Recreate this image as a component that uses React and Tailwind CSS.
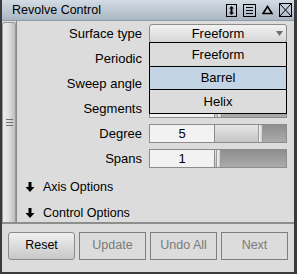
import React from "react";

const font = { fontFamily: '"Liberation Sans", Arial, sans-serif' };

function DownArrow() {
  return (
    <svg width="10" height="10" viewBox="0 0 10 10" className="block">
      <polygon points="3.5,0 6.5,0 6.5,5 9.5,5 5,10 0.5,5 3.5,5" fill="#000" />
    </svg>
  );
}

function Field({ value, pos }) {
  return (
    <div className="flex h-[19px] w-[138px]">
      <div className="flex w-[66px] items-center justify-center border border-[#8c8c8c] bg-[#f2f2f2] text-[13px] text-black">
        {value}
      </div>
      <div className="relative flex flex-1 border border-l-0 border-[#8c8c8c]">
        <div className="bg-gradient-to-b from-[#e6e6e6] to-[#c6c6c6]" style={{ width: pos }} />
        <div className="w-[5px] border-x border-[#9a9a9a] bg-gradient-to-r from-[#f4f4f4] to-[#cfcfcf]" />
        <div className="flex-1 bg-gradient-to-b from-[#8e8e8e] to-[#ababab]" />
      </div>
    </div>
  );
}

function Row({ label, children }) {
  return (
    <div className="flex h-[19px] items-center gap-[7px]">
      <div className="w-[125px] text-right text-[13px] leading-none text-black">{label}</div>
      {children}
    </div>
  );
}

export default function App() {
  return (
    <div
      style={font}
      className="relative flex h-[274px] w-[297px] flex-col overflow-hidden border-b-2 border-l-2 border-r-[3px] border-[#3a3a3a] bg-[#dcdcdc]"
    >
      {/* Title bar */}
      <div className="flex h-[21px] shrink-0 items-center border-b border-[#8e9aa6] bg-gradient-to-b from-[#d3dce5] to-[#aab6c2] pl-[10px] pr-[2px]">
        <div className="flex-1 text-[12.5px] text-black">Revolve Control</div>
        <div className="flex items-center gap-[6px]">
          <svg width="11" height="13" viewBox="0 0 11 13">
            <rect x="0.5" y="0.5" width="10" height="12" fill="none" stroke="#000" />
            <polygon points="5.5,2 8,4.5 3,4.5" fill="#000" />
            <polygon points="5.5,11 8,8.5 3,8.5" fill="#000" />
            <rect x="4.5" y="4" width="2" height="5" fill="#000" />
          </svg>
          <svg width="13" height="13" viewBox="0 0 13 13">
            <rect x="0.5" y="0.5" width="12" height="12" fill="none" stroke="#000" />
            <line x1="3" y1="3.5" x2="10" y2="3.5" stroke="#000" />
            <line x1="3" y1="6.5" x2="10" y2="6.5" stroke="#000" />
            <line x1="3" y1="9.5" x2="10" y2="9.5" stroke="#000" />
          </svg>
          <svg width="11" height="10" viewBox="0 0 11 10">
            <polygon points="5.5,1.5 10,8.5 1,8.5" fill="none" stroke="#000" strokeWidth="1.6" strokeLinejoin="miter" />
          </svg>
          <svg width="13" height="14" viewBox="0 0 13 14">
            <rect x="0.5" y="0.5" width="12" height="13" fill="none" stroke="#000" />
            <line x1="1" y1="1" x2="12" y2="13" stroke="#000" />
            <line x1="12" y1="1" x2="1" y2="13" stroke="#000" />
          </svg>
        </div>
      </div>

      {/* Body */}
      <div className="flex h-[201px] shrink-0">
        {/* left strip */}
        <div className="mt-[1px] flex w-[14px] shrink-0 flex-col items-center justify-center rounded-t-[3px] border border-b-0 border-[#9a9a9a] bg-gradient-to-r from-[#ececec] via-[#e0e0e0] to-[#bdbdbd]">
          <div className="flex flex-col gap-[2px]">
            <div className="h-[1px] w-[7px] bg-[#6e6e6e]" />
            <div className="h-[1px] w-[7px] bg-[#6e6e6e]" />
            <div className="h-[1px] w-[7px] bg-[#6e6e6e]" />
          </div>
        </div>
        <div className="relative flex flex-1 flex-col border-l border-[#8a8a8a] pt-[3px]">
          <div className="flex flex-col gap-[6px]">
            <Row label="Surface type">
              <div className="relative flex h-[19px] w-[138px] items-center justify-center rounded-[3px] border border-[#8c8c8c] bg-gradient-to-b from-[#f2f2f2] to-[#d6d6d6] text-[13px]">
                Freeform
                <svg className="absolute right-[3px] top-[6px]" width="7" height="5" viewBox="0 0 7 5">
                  <polygon points="0,0 7,0 3.5,5" fill="#6e6e6e" />
                </svg>
              </div>
            </Row>
            <Row label="Periodic">
              <div className="h-[13px] w-[13px] border border-[#8c8c8c] bg-white" />
            </Row>
            <Row label="Sweep angle">
              <Field value="360" pos={50} />
            </Row>
            <Row label="Segments">
              <Field value="8" pos={2} />
            </Row>
            <Row label="Degree">
              <Field value="5" pos={43} />
            </Row>
            <Row label="Spans">
              <Field value="1" pos={1} />
            </Row>
          </div>
          <div className="mt-[6px] flex flex-col">
            <div className="flex h-[26px] items-center gap-[8px] pl-[8px] text-[12.5px]">
              <DownArrow />
              <span>Axis Options</span>
            </div>
            <div className="flex h-[26px] items-center gap-[8px] pl-[8px] text-[12.5px]">
              <DownArrow />
              <span>Control Options</span>
            </div>
          </div>

          {/* popup */}
          <div className="absolute left-[132px] top-[21px] flex w-[138px] flex-col border border-black bg-[#dcdcdc] text-[13px]">
            <div className="flex h-[24px] items-center justify-center border-b border-black">Freeform</div>
            <div className="flex h-[23px] items-center justify-center border-b border-black bg-[#c3d4e4]">Barrel</div>
            <div className="flex h-[23px] items-center justify-center">Helix</div>
          </div>
        </div>
      </div>

      {/* separator */}
      <div className="h-[2px] shrink-0 bg-[#8e8e8e]" />

      {/* buttons */}
      <div className="grid flex-1 grid-cols-4 items-center gap-[4px] px-[6px] pb-[5px]">
        <button className="flex h-[28px] items-center justify-center rounded-[3px] border border-[#8a8a8a] bg-gradient-to-b from-[#f0f0f0] to-[#c8c8c8] text-[12.5px] text-black">
          Reset
        </button>
        <button className="flex h-[28px] items-center justify-center border border-[#7e7e7e] text-[12.5px] text-[#7a7a7a]">
          Update
        </button>
        <button className="flex h-[28px] items-center justify-center border border-[#7e7e7e] text-[12.5px] text-[#7a7a7a]">
          Undo All
        </button>
        <button className="flex h-[28px] items-center justify-center border border-[#7e7e7e] text-[12.5px] text-[#7a7a7a]">
          Next
        </button>
      </div>
    </div>
  );
}
